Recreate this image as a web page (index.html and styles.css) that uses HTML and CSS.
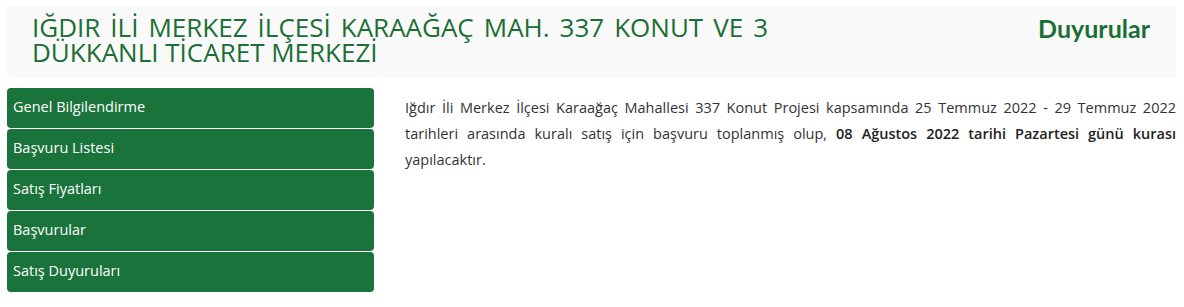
FILE: index.html
```html
<!DOCTYPE html>
<html lang="tr">
<head>
    <meta charset="UTF-8">
    <meta name="viewport" content="width=device-width, initial-scale=1.0">
    <title>Duyurular</title>
    <link rel="stylesheet" href="styles.css">
</head>
<body>
    <div class="page-head">
        <h1 class="project-title">IĞDIR İLİ MERKEZ İLÇESİ KARAAĞAÇ MAH. 337 KONUT VE 3 DÜKKANLI TİCARET MERKEZİ</h1>
        <h2 class="page-name">Duyurular</h2>
    </div>

    <div class="content">
        <ul class="side-menu">
            <li><a href="#">Genel Bilgilendirme</a></li>
            <li><a href="#">Başvuru Listesi</a></li>
            <li><a href="#">Satış Fiyatları</a></li>
            <li><a href="#">Başvurular</a></li>
            <li><a href="#">Satış Duyuruları</a></li>
        </ul>

        <div class="announcement">
            <p>Iğdır İli Merkez İlçesi Karaağaç Mahallesi 337 Konut Projesi kapsamında 25 Temmuz 2022 - 29 Temmuz 2022 tarihleri arasında kuralı satış için başvuru toplanmış olup, <strong>08 Ağustos 2022 tarihi Pazartesi günü kurası</strong> yapılacaktır.</p>
        </div>
    </div>
</body>
</html>
```

FILE: styles.css
```css
body {
    margin: 0;
    padding: 6px 8px 0 7px;
    font-family: "Open Sans", Lato, sans-serif;
    background-color: #fff;
    color: #333;
}
.page-head {
    display: flex;
    justify-content: space-between;
    align-items: flex-start;
    background-color: #f9f9f9;
    padding: 9px 26px 9px 25px;
    height: 53px;
}
.project-title {
    margin: 0;
    width: 736px;
    font-size: 26px;
    font-weight: normal;
    line-height: 25px;
    color: #1b6e35;
    text-align: justify;
}
.page-name {
    margin: -2px 0 0 0;
    font-family: Lato, sans-serif;
    font-size: 25px;
    font-weight: bold;
    line-height: 30px;
    color: #1b6e35;
}
.content {
    display: flex;
    gap: 31px;
    margin-top: 11px;
}
.side-menu {
    list-style: none;
    margin: 0;
    padding: 0;
    width: 367px;
    flex-shrink: 0;
    display: flex;
    flex-direction: column;
    gap: 1px;
}
.side-menu a {
    display: block;
    height: 40px;
    line-height: 38px;
    padding-left: 6px;
    background-color: #1a733a;
    border-radius: 4px;
    color: #fff;
    font-size: 14.5px;
    text-decoration: none;
}
.announcement {
    flex: 1;
}
.announcement p {
    margin: 7px 0 0 0;
    font-size: 14.5px;
    line-height: 26px;
    text-align: justify;
    color: #333;
}
.announcement strong {
    font-weight: 600;
    color: #222;
}
```
